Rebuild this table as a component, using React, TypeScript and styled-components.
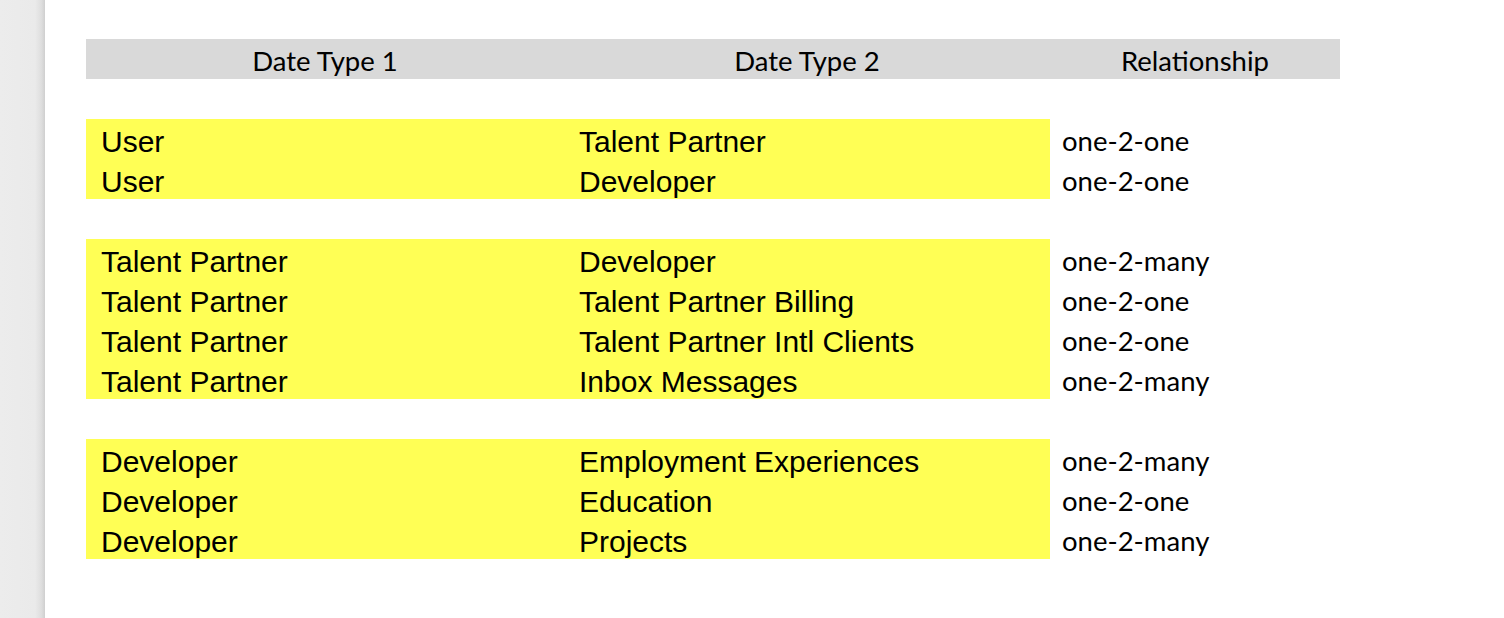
import styled, { createGlobalStyle } from "styled-components";

const GlobalStyle = createGlobalStyle`
    html, body {
        margin: 0;
        padding: 0;
        background: #fff;
    }
`;

interface Relation {
    from: string;
    to: string;
    kind: string;
}

/** groups of rows, a blank row between each group */
const groups: Relation[][] = [
    [
        { from: "User", to: "Talent Partner", kind: "one-2-one" },
        { from: "User", to: "Developer", kind: "one-2-one" },
    ],
    [
        { from: "Talent Partner", to: "Developer", kind: "one-2-many" },
        { from: "Talent Partner", to: "Talent Partner Billing", kind: "one-2-one" },
        { from: "Talent Partner", to: "Talent Partner Intl Clients", kind: "one-2-one" },
        { from: "Talent Partner", to: "Inbox Messages", kind: "one-2-many" },
    ],
    [
        { from: "Developer", to: "Employment Experiences", kind: "one-2-many" },
        { from: "Developer", to: "Education", kind: "one-2-one" },
        { from: "Developer", to: "Projects", kind: "one-2-many" },
    ],
];

const App = () => {
    return (
        <Page>
            <GlobalStyle />
            <Sidebar />
            <Content>
                <Sheet>
                    <HeaderCell>Date Type 1</HeaderCell>
                    <HeaderCell>Date Type 2</HeaderCell>
                    <HeaderCell>Relationship</HeaderCell>
                    {groups.map((group, gi) => (
                        <Group key={gi}>
                            <BlankRow />
                            {group.map((r, ri) => (
                                <Row key={ri}>
                                    <NameCell>{r.from}</NameCell>
                                    <NameCell>{r.to}</NameCell>
                                    <KindCell>{r.kind}</KindCell>
                                </Row>
                            ))}
                        </Group>
                    ))}
                </Sheet>
            </Content>
        </Page>
    );
};

export default App;

const Page = styled.div`
    display: flex;
    width: 100%;
    height: 618px;
    overflow: hidden;
`;

const Sidebar = styled.div`
    width: 45px;
    min-width: 45px;
    height: 100%;
    background: linear-gradient(to right, #ececec 0%, #eaeaea 78%, #dedede 92%, #cfcfcf 100%);
`;

const Content = styled.div`
    flex: 1;
    padding-top: 39px;
    padding-left: 41px;
`;

const Sheet = styled.div`
    display: grid;
    grid-template-columns: 478px 486px 290px;
    grid-auto-rows: 40px;
`;

const HeaderCell = styled.div`
    display: flex;
    justify-content: center;
    box-sizing: border-box;
    padding-top: 6px;
    height: 40px;
    line-height: 32px;

    background-color: #d9d9d9;
    color: #000;
    font-family: Lato, "Open Sans", sans-serif;
    font-size: 27.5px;
`;

const Group = styled.div`
    display: contents;
`;

const BlankRow = styled.div`
    grid-column: 1 / -1;
`;

const Row = styled.div`
    display: contents;
`;

const NameCell = styled.div`
    box-sizing: border-box;
    padding: 6px 0 0 15px;
    height: 40px;
    line-height: 33px;
    white-space: nowrap;

    background-color: #ffff55;
    color: #000;
    font-family: "Liberation Sans", Arial, sans-serif;
    font-size: 30px;
`;

const KindCell = styled.div`
    box-sizing: border-box;
    padding: 6px 0 0 12px;
    height: 40px;
    line-height: 32px;
    white-space: nowrap;

    color: #000;
    font-family: Lato, "Open Sans", sans-serif;
    font-size: 27.5px;
`;
